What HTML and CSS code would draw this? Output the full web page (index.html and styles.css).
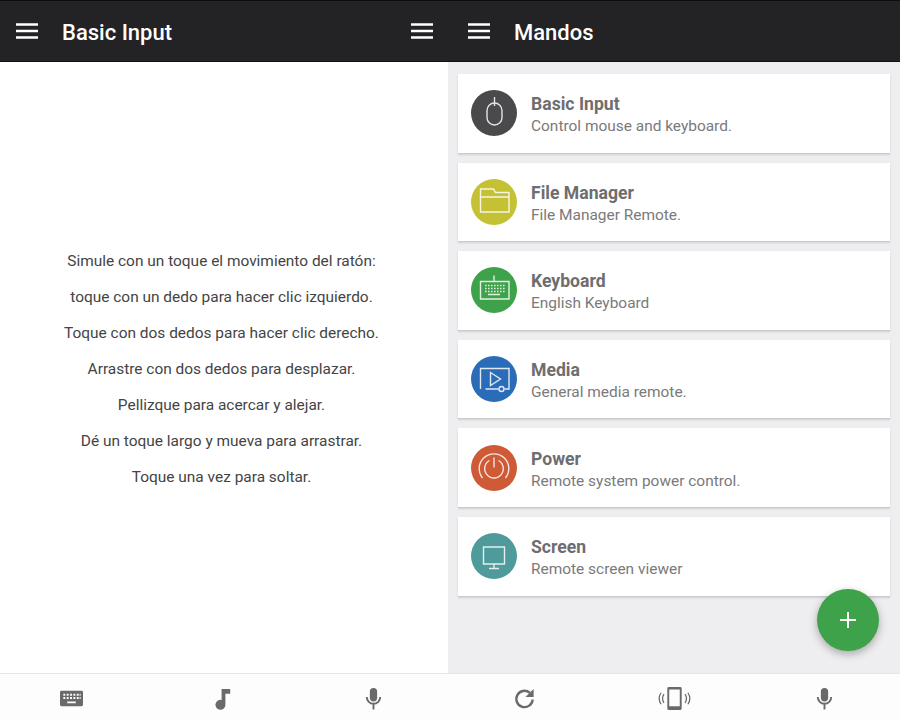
FILE: index.html
```html
<!DOCTYPE html>
<html lang="en">
<head>
    <meta charset="UTF-8">
    <meta name="viewport" content="width=device-width, initial-scale=1.0">
    <title>Unified Remote</title>
    <link rel="stylesheet" href="styles.css">
</head>
<body>
    <div class="container">
        <div class="pane pane-left">
            <header class="toolbar">
                <svg class="menu-icon" viewBox="0 0 22 16"><path d="M0 1.5h22M0 8h22M0 14.5h22"/></svg>
                <h1>Basic Input</h1>
                <svg class="menu-icon menu-right" viewBox="0 0 22 16"><path d="M0 1.5h22M0 8h22M0 14.5h22"/></svg>
            </header>
            <main class="help">
                <p>Simule con un toque el movimiento del ratón:</p>
                <p>toque con un dedo para hacer clic izquierdo.</p>
                <p>Toque con dos dedos para hacer clic derecho.</p>
                <p>Arrastre con dos dedos para desplazar.</p>
                <p>Pellizque para acercar y alejar.</p>
                <p>Dé un toque largo y mueva para arrastrar.</p>
                <p>Toque una vez para soltar.</p>
            </main>
            <footer class="bottom-bar">
                <svg class="bar-icon bar-icon-kb" viewBox="0 0 24 18">
                    <path class="fill" fill-rule="evenodd" d="M1.500 1h21q1.500 0 1.500 1.500v13q0 1.500-1.500 1.500h-21q-1.500 0-1.500-1.500v-13q0-1.500 1.500-1.500zM3.500 4v2h2v-2zM7 4v2h2v-2zM10.500 4v2h2v-2zM14 4v2h2v-2zM17.500 4v2h2v-2zM20.500 4v2h1v-2zM3.500 7.500v2h2v-2zM7 7.500v2h2v-2zM10.500 7.500v2h2v-2zM14 7.500v2h2v-2zM17.500 7.500v2h2v-2zM20.500 7.500v2h1v-2zM7.500 12v2h9v-2z"/>
                </svg>
                <svg class="bar-icon" viewBox="0 0 24 24">
                    <path class="fill" d="M10 2h9v5h-5v11.500a5.200 5.200 0 1 1-4-5z"/>
                </svg>
                <svg class="bar-icon" viewBox="0 0 24 24">
                    <path class="fill" d="M12 1a3.800 3.800 0 0 1 3.800 3.800v6.400a3.800 3.800 0 0 1-7.600 0v-6.400a3.800 3.800 0 0 1 3.800-3.800z"/>
                    <path class="line" d="M5 10.500a7 7 0 0 0 14 0M12 18v5.500"/>
                </svg>
            </footer>
        </div>

        <div class="pane pane-right">
            <header class="toolbar">
                <svg class="menu-icon" viewBox="0 0 22 16"><path d="M0 1.5h22M0 8h22M0 14.5h22"/></svg>
                <h1>Mandos</h1>
            </header>
            <main class="remotes">
                <div class="card">
                    <div class="avatar c-dark">
                        <svg viewBox="0 0 46 46"><rect x="16" y="13" width="15" height="22" rx="7.500"/><path d="M23.500 7v9"/></svg>
                    </div>
                    <div class="card-text">
                        <div class="card-title">Basic Input</div>
                        <div class="card-sub">Control mouse and keyboard.</div>
                    </div>
                </div>
                <div class="card">
                    <div class="avatar c-yellow">
                        <svg viewBox="0 0 46 46"><path d="M9.500 33V10h13l2 3.500h13.500V33zM9.500 18h28.500"/></svg>
                    </div>
                    <div class="card-text">
                        <div class="card-title">File Manager</div>
                        <div class="card-sub">File Manager Remote.</div>
                    </div>
                </div>
                <div class="card">
                    <div class="avatar c-green">
                        <svg viewBox="0 0 46 46">
                            <path d="M9.500 14.500h28.500v17.500h-28.500zM23 14.500v-6M17 27.500h12"/>
                            <path class="dots" d="M14 18.500h20M14 21.500h20M14 24.500h20"/>
                        </svg>
                    </div>
                    <div class="card-text">
                        <div class="card-title">Keyboard</div>
                        <div class="card-sub">English Keyboard</div>
                    </div>
                </div>
                <div class="card">
                    <div class="avatar c-blue">
                        <svg viewBox="0 0 46 46">
                            <path d="M9.500 33V12.500h28.500V33h-4.500M14.500 33h13M19.500 16.500l10 6.500-10 6.500z"/>
                            <circle cx="30.500" cy="33" r="2.500"/>
                        </svg>
                    </div>
                    <div class="card-text">
                        <div class="card-title">Media</div>
                        <div class="card-sub">General media remote.</div>
                    </div>
                </div>
                <div class="card">
                    <div class="avatar c-red">
                        <svg viewBox="0 0 46 46">
                            <path d="M18.500 15.500a9.300 9.300 0 1 0 9 0M23 12.500v10M11.500 33a14.800 14.800 0 1 1 23 0"/>
                        </svg>
                    </div>
                    <div class="card-text">
                        <div class="card-title">Power</div>
                        <div class="card-sub">Remote system power control.</div>
                    </div>
                </div>
                <div class="card">
                    <div class="avatar c-teal">
                        <svg viewBox="0 0 46 46"><path d="M12.500 14h21v17h-21zM23 31v4.500M18 35.500h10"/></svg>
                    </div>
                    <div class="card-text">
                        <div class="card-title">Screen</div>
                        <div class="card-sub">Remote screen viewer</div>
                    </div>
                </div>
                <button class="fab" aria-label="Add">
                    <svg viewBox="0 0 16 16"><path d="M8 0v16M0 8h16"/></svg>
                </button>
            </main>
            <footer class="bottom-bar">
                <svg class="bar-icon" viewBox="0 0 24 24">
                    <path class="line thick" d="M20.500 13a8.500 8.500 0 1 1-3-7"/>
                    <path class="fill" d="M21.500 2v8.500h-8.500z"/>
                </svg>
                <svg class="bar-icon bar-icon-wide" viewBox="0 0 34 24">
                    <path class="fill" fill-rule="evenodd" d="M11 0h12q1.500 0 1.500 1.500v21q0 1.500-1.500 1.500h-12q-1.500 0-1.500-1.500v-21q0-1.500 1.500-1.500zM11.500 2.500v17.500h11v-17.500z"/>
                    <path class="line thin" d="M6 7.500q-3 4.500 0 9M3 6q-4 6 0 12M28 7.500q3 4.500 0 9M31 6q4 6 0 12"/>
                </svg>
                <svg class="bar-icon" viewBox="0 0 24 24">
                    <path class="fill" d="M12 1a3.800 3.800 0 0 1 3.800 3.800v6.400a3.800 3.800 0 0 1-7.600 0v-6.400a3.800 3.800 0 0 1 3.800-3.800z"/>
                    <path class="line" d="M5 10.500a7 7 0 0 0 14 0M12 18v5.500"/>
                </svg>
            </footer>
        </div>
    </div>
</body>
</html>
```

FILE: styles.css
```css
html, body {
    margin: 0;
    padding: 0;
    height: 100%;
}

body {
    font-family: Roboto, "Liberation Sans", sans-serif;
    background-color: #fff;
    overflow: hidden;
}

.container {
    display: flex;
    height: 720px;
}

.pane {
    display: flex;
    flex-direction: column;
    height: 100%;
}

.pane-left {
    width: 449px;
}

.pane-right {
    width: 451px;
}

.toolbar {
    display: flex;
    align-items: center;
    height: 62px;
    flex-shrink: 0;
    padding: 0 16px;
    box-sizing: border-box;
    background-color: #232224;
    border-top: 1px solid #0c0c0c;
    border-bottom: 1px solid #111;
    color: #fff;
}

.pane-right .toolbar {
    padding-left: 19px;
}

.toolbar h1 {
    margin: 4px 0 0 24px;
    font-size: 22px;
    font-weight: 500;
    line-height: 1;
}

.menu-icon {
    width: 22px;
    height: 16px;
    flex-shrink: 0;
    fill: none;
    stroke: #fff;
    stroke-width: 2.4;
}

.menu-right {
    margin-left: auto;
}

.help {
    flex: 1;
    display: flex;
    flex-direction: column;
    justify-content: center;
    align-items: center;
    padding-right: 5px;
    padding-top: 2px;
    background-color: #fff;
    border-right: 1px solid #eee;
    color: #444;
    font-size: 15.450px;
    line-height: 36px;
}

.help p {
    margin: 0;
}

.bottom-bar {
    display: grid;
    grid-template-columns: repeat(3, 1fr);
    justify-items: center;
    align-items: center;
    height: 47px;
    flex-shrink: 0;
    box-sizing: border-box;
    padding: 2px 1px 0 0;
    background-color: #fdfdfd;
    border-top: 1px solid #e6e6e6;
}

.bar-icon {
    width: 23px;
    height: 23px;
}

.bar-icon-kb {
    margin-right: 7px;
}

.bar-icon-wide {
    width: 33px;
}

.bar-icon .fill {
    fill: #6a6a6a;
}

.bar-icon .line {
    fill: none;
    stroke: #6a6a6a;
    stroke-width: 2;
}

.bar-icon .thick {
    stroke-width: 2.500;
}

.bar-icon .thin {
    stroke-width: 1.300;
}

.remotes {
    position: relative;
    flex: 1;
    display: flex;
    flex-direction: column;
    gap: 9px;
    padding: 12px 10px 0 9px;
    background-color: #eeedef;
}

.card {
    display: flex;
    align-items: center;
    height: 79.600px;
    box-sizing: border-box;
    padding-left: 13px;
    background-color: #fff;
    border-bottom: 1px solid #c9c9c9;
    box-shadow: 0 1px 2px rgba(0, 0, 0, 0.12);
}

.avatar {
    width: 46px;
    height: 46px;
    border-radius: 50%;
    flex-shrink: 0;
}

.avatar svg {
    display: block;
    width: 46px;
    height: 46px;
    fill: none;
    stroke: #fff;
    stroke-width: 1.400;
    opacity: 0.85;
}

.avatar .dots {
    stroke-width: 1.500;
    stroke-dasharray: 1.600 1.400;
}

.c-dark { background-color: #4a494b; }
.c-yellow { background-color: #c5c135; }
.c-green { background-color: #3ea24a; }
.c-blue { background-color: #2a6cb8; }
.c-red { background-color: #cf5a36; }
.c-teal { background-color: #4f9a9b; }

.card-text {
    margin-left: 14px;
    padding-top: 4px;
}

.card-title {
    font-size: 17.600px;
    font-weight: 700;
    line-height: 22px;
    color: #6e6d6f;
}

.card-sub {
    font-size: 15.450px;
    line-height: 22px;
    color: #7a7a7a;
}

.fab {
    position: absolute;
    right: 21px;
    bottom: 22px;
    width: 62px;
    height: 62px;
    padding: 0;
    border: none;
    border-radius: 50%;
    display: flex;
    align-items: center;
    justify-content: center;
    background-color: #3ea24a;
    box-shadow: 0 3px 8px rgba(0, 0, 0, 0.3);
}

.fab svg {
    width: 16px;
    height: 16px;
    fill: none;
    stroke: #fff;
    stroke-width: 2;
}
```
